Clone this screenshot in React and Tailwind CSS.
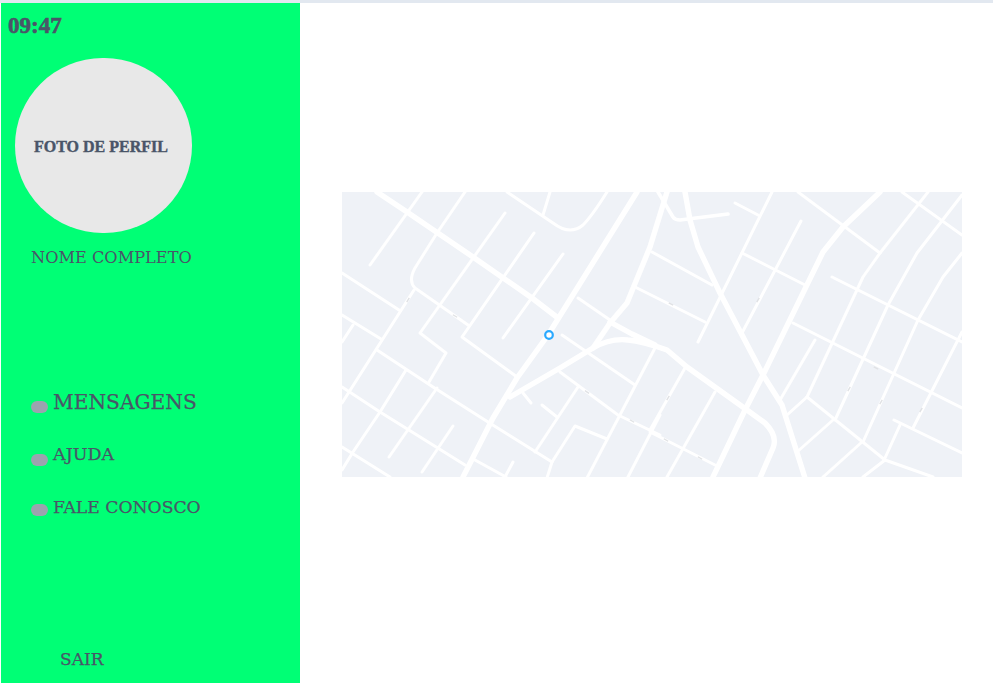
const thinRoads = [
  'M422 192L370 265',
  'M465 192L437 233L415 268Q408 281 415 288L468 325',
  'M505 213L420 333L446 353L429 382',
  'M534 233L462 337L517 377',
  'M563 254L503 338',
  'M342 273L399 310',
  'M414 290L342 403',
  'M342 315L381 339',
  'M353 325L342 342',
  'M377 350L433 387L488 422L552 462',
  'M406 370L380 412L353 452L342 470',
  'M342 387L380 412L465 465',
  'M437 388L389 457',
  'M453 426L422 472',
  'M342 447L390 477',
  'M578 298L610 320',
  'M635 287L705 322',
  'M652 252L712 285',
  'M507 192L553 223Q570 236 583 225Q592 216 607 192',
  'M550 192L543 215',
  'M562 335L635 385',
  'M560 372L618 415L660 435',
  'M655 348L587 478',
  'M578 387L535 452',
  'M523 393L531 403',
  'M542 405L557 417',
  'M475 460L506 477',
  'M513 462L505 477',
  'M547 478L552 462L575 426L607 439',
  'M660 415L628 477',
  'M735 203L758 215',
  'M772 192L698 342',
  'M801 221L742 333',
  'M742 253L805 285',
  'M798 192L880 253',
  'M902 192L962 235',
  'M928 192L880 253L863 277L807 397',
  'M962 195L917 253L888 305L835 420',
  'M962 253L943 277L918 320L863 442',
  'M832 277L962 342',
  'M793 323L962 408',
  'M815 340L780 400',
  'M807 397L787 415',
  'M807 397L885 460L933 477',
  'M833 420L797 452',
  'M862 442L823 477',
  'M885 460L863 477',
  'M900 425L885 458',
  'M894 420L962 453',
  'M962 332L913 428',
  'M650 432L715 465',
  'M685 368L650 430',
  'M715 392L667 477',
]

const wideRoads = [
  'M377 192L407 212L473 257L532 298L558 318',
  'M463 477L493 418L517 378L548 335L637 192',
  'M510 397L560 368L593 348Q610 338 628 340Q642 341 667 350L687 367L747 410L765 423Q778 436 773 448L760 478',
  'M667 192L650 247L627 303L610 323L593 348',
  'M610 322L632 334L655 345',
  'M685 192L690 220L698 247L720 293L763 375L782 405L805 478',
  'M880 192L843 227L823 252L763 375L745 410L713 477',
]

const midRoads = ['M658 192L673 217Q675 220 680 220L728 214']

const marks = [
  [408, 300, -60], [455, 316, 30], [587, 392, 35], [632, 421, 30],
  [671, 304, 28], [758, 300, -60], [668, 398, -60], [666, 440, 30],
  [700, 458, 30], [876, 368, 28], [849, 389, -60], [881, 402, -60], [921, 410, -60],
]

function MapDrawing() {
  return (
    <svg viewBox="342 192 620 285" className="block w-[620px] h-[285px] bg-[#eff2f7]" fill="none" stroke="#ffffff" strokeLinejoin="round" strokeLinecap="round">
      <g strokeWidth="3">
        {thinRoads.map((d) => <path key={d} d={d} />)}
      </g>
      <g strokeWidth="3.6">
        {midRoads.map((d) => <path key={d} d={d} />)}
      </g>
      <g strokeWidth="5.4">
        {wideRoads.map((d) => <path key={d} d={d} />)}
      </g>
      {marks.map(([x, y, r]) => (
        <rect key={x + '-' + y} x={x - 2.5} y={y - 0.7} width="5" height="1.4" fill="#e0e2e5" stroke="none" transform={`rotate(${r} ${x} ${y})`} />
      ))}
      <circle cx="549" cy="335" r="3.8" fill="#ffffff" stroke="#2aa9ff" strokeWidth="2.2" />
    </svg>
  )
}

function MenuItem({ label, className, dotClass }) {
  return (
    <div className={`flex items-start ${className}`}>
      <span className={`w-[17px] h-3 rounded-full bg-[#9ca3af] shrink-0 ${dotClass}`} />
      <span className="ml-[5px] font-['DejaVu_Serif',serif] whitespace-nowrap [-webkit-text-stroke:0.25px_#4a5568]">{label}</span>
    </div>
  )
}

export default function App() {
  return (
    <div className="w-[993px] h-[684px] overflow-hidden bg-white border-t-[3px] border-[#e2e8f0] flex text-[#4a5568]">
      {/* Sidebar */}
      <aside className="ml-px w-[299px] h-[680px] bg-[#00ff75] flex flex-col shrink-0">
        <div className="mt-[9px] ml-[7px] h-7 text-[23px] leading-7 font-bold font-['Liberation_Serif',serif] [-webkit-text-stroke:0.6px_#4a5568]">09:47</div>

        <div className="mt-[18px] ml-[14px] w-[177px] h-[175px] rounded-full bg-[#e8e8e8] flex items-center justify-center">
          <span className="mt-[2px] text-[16px] font-bold font-['Liberation_Serif',serif] whitespace-nowrap -ml-[5px] [-webkit-text-stroke:0.4px_#4a5568]">FOTO DE PERFIL</span>
        </div>

        <div className="mt-[15px] ml-[30px] text-[16.2px] leading-5 font-['DejaVu_Serif',serif] whitespace-nowrap">NOME COMPLETO</div>

        <MenuItem label="MENSAGENS" className="mt-[120px] ml-[30px] text-[20.2px] leading-7" dotClass="mt-[13px]" />
        <MenuItem label="AJUDA" className="mt-[26px] ml-[30px] text-[17.5px] leading-6" dotClass="mt-[12px]" />
        <MenuItem label="FALE CONOSCO" className="mt-[29px] ml-[30px] text-[17.2px] leading-6" dotClass="mt-[9px]" />

        <div className="mt-auto mb-[14px] ml-[59px] text-[17px] leading-5 font-['DejaVu_Serif',serif] [-webkit-text-stroke:0.25px_#4a5568]">SAIR</div>
      </aside>

      {/* Map area */}
      <main className="flex-1 pl-[42px] pt-[189px]">
        <MapDrawing />
      </main>
    </div>
  )
}
